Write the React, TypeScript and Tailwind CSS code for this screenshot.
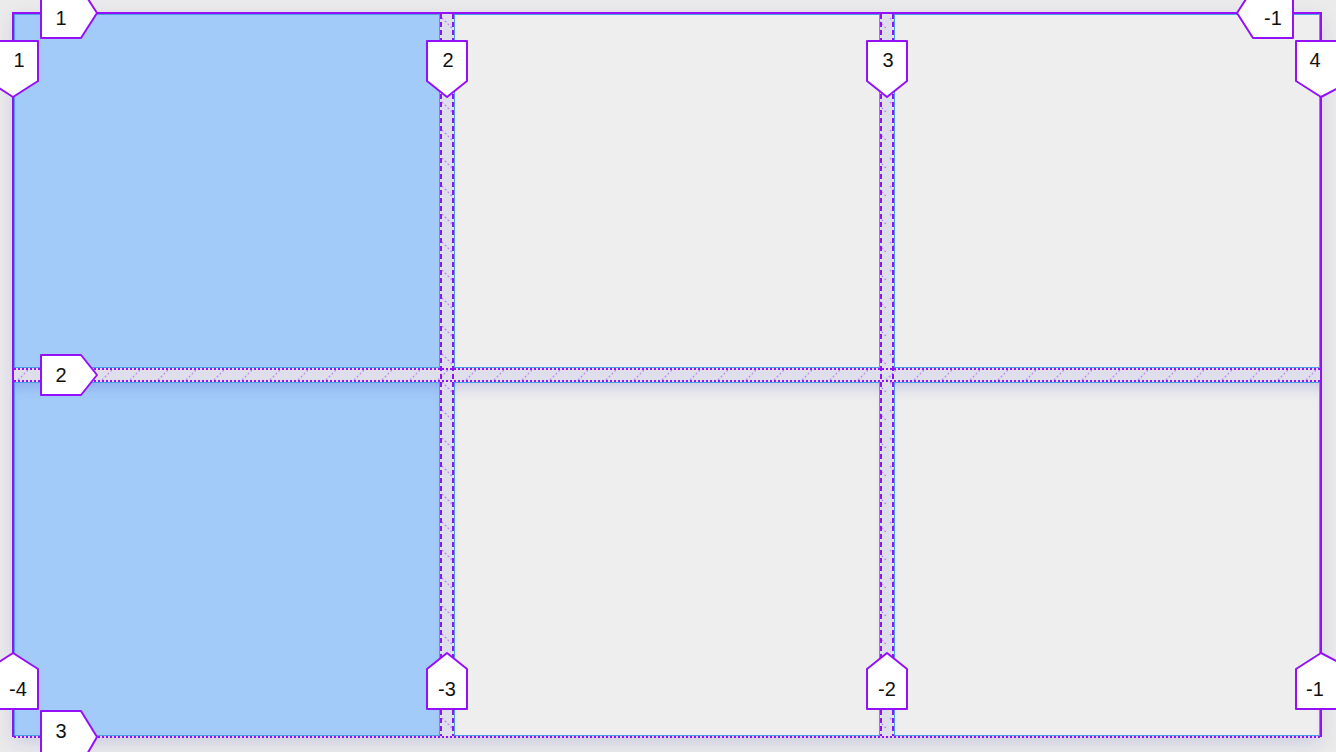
import React from 'react';

const PURPLE = '#9410f8';
const HATCH = '#b98af0';

type Tag = { pts: string; text: string; x: number; y: number };

// grid line number tags, drawn over the page the way the inspector does
const TAGS: Tag[] = [
  // row lines, left side, pointing right
  { pts: '41,-4 86,-4 97,13 81,38 41,38', text: '1', x: 61, y: 18 },
  { pts: '41,355 81,355 97,375 81,395 41,395', text: '2', x: 61, y: 375 },
  { pts: '41,711 81,711 97,737 86,756 41,756', text: '3', x: 61, y: 731 },
  // row line -1, right side, pointing left
  { pts: '1293,-4 1293,38 1253,38 1237,13 1248,-4', text: '-1', x: 1273, y: 18 },
  // column lines, top, pointing down
  { pts: '-4,41 38,41 38,81 13,97 -4,86', text: '1', x: 19, y: 60 },
  { pts: '427,41 467,41 467,81 447,97 427,81', text: '2', x: 448, y: 60 },
  { pts: '867,41 907,41 907,81 887,97 867,81', text: '3', x: 888, y: 60 },
  { pts: '1296,41 1342,41 1342,86 1321,97 1296,81', text: '4', x: 1315, y: 60 },
  // column lines, bottom, pointing up
  { pts: '-4,709 38,709 38,669 13,653 -4,664', text: '-4', x: 18, y: 689 },
  { pts: '427,709 467,709 467,669 447,653 427,669', text: '-3', x: 447, y: 689 },
  { pts: '867,709 907,709 907,669 887,653 867,669', text: '-2', x: 887, y: 689 },
  { pts: '1296,709 1342,709 1342,664 1321,653 1296,669', text: '-1', x: 1315, y: 689 },
];

const CELLS = [
  'bg-[#a2cbf9]',
  'bg-[#eeeeee]',
  'bg-[#eeeeee]',
  'bg-[#a2cbf9] shadow-[inset_0_14px_14px_-10px_rgba(90,90,200,0.28)]',
  'bg-[#eeeeee] shadow-[inset_0_14px_14px_-10px_rgba(90,90,200,0.28)]',
  'bg-[#eeeeee] shadow-[inset_0_14px_14px_-10px_rgba(90,90,200,0.28)]',
];

function Overlay() {
  return (
    <svg className="pointer-events-none absolute left-0 top-0" width={1336} height={752} viewBox="0 0 1336 752">
      <defs>
        <pattern id="hatchCol" patternUnits="userSpaceOnUse" x={440} y={14} width={14} height={28}>
          <line x1={2} y1={4} x2={12} y2={14} stroke={HATCH} strokeWidth={1.3} strokeDasharray="2 2" />
        </pattern>
        <pattern id="hatchRow" patternUnits="userSpaceOnUse" x={14} y={368} width={28} height={14}>
          <line x1={4} y1={12} x2={14} y2={2} stroke={HATCH} strokeWidth={1.3} strokeDasharray="2 2" />
        </pattern>
      </defs>

      {/* gap hatching */}
      <rect x={440} y={14} width={14} height={722} fill="url(#hatchCol)" />
      <rect x={880} y={14} width={14} height={722} fill="url(#hatchCol)" />
      <rect x={14} y={368} width={1306} height={14} fill="url(#hatchRow)" />

      {/* gap edges */}
      <g stroke={PURPLE} strokeWidth={2} fill="none">
        <line x1={441} y1={14} x2={441} y2={736} strokeDasharray="5 3" />
        <line x1={453} y1={14} x2={453} y2={736} strokeDasharray="5 3" />
        <line x1={881} y1={14} x2={881} y2={736} strokeDasharray="5 3" />
        <line x1={893} y1={14} x2={893} y2={736} strokeDasharray="5 3" />
        <line x1={14} y1={369} x2={1320} y2={369} strokeDasharray="2 2" />
        <line x1={14} y1={381} x2={1320} y2={381} strokeDasharray="2 2" />
        <line x1={14} y1={737} x2={1320} y2={737} strokeDasharray="2 2" />
        {/* outline */}
        <polyline points="13,737 13,13 1321,13 1321,737" />
      </g>

      {TAGS.map((t, i) => (
        <g key={i}>
          <polygon points={t.pts} fill="#ffffff" stroke={PURPLE} strokeWidth={2} strokeLinejoin="round" />
          <text
            x={t.x}
            y={t.y}
            textAnchor="middle"
            dominantBaseline="central"
            fontFamily='"Liberation Sans", Arial, sans-serif'
            fontSize={20}
            fill="#111111"
          >
            {t.text}
          </text>
        </g>
      ))}
    </svg>
  );
}

export default function App() {
  return (
    <div className="relative h-[752px] w-[1336px] overflow-hidden bg-[#ebebeb] pl-[14px] pt-[14px]">
      <div className="grid h-[722px] w-[1306px] grid-cols-3 grid-rows-2 gap-[14px] bg-[#dfdfec] shadow-[0_6px_18px_rgba(80,80,190,0.22)]">
        {CELLS.map((c, i) => (
          <div key={i} className={`border border-[#4b9ee8] ${c}`} />
        ))}
      </div>
      <Overlay />
    </div>
  );
}
